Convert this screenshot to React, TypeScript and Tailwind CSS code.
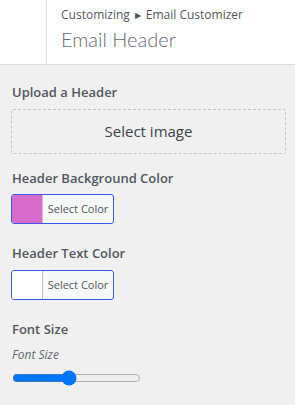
import React from "react";

function ColorButton({ color }: { color: string }) {
  return (
    <button className="flex h-[30px] w-[103px] overflow-hidden rounded-[3px] border border-[#3858e9] bg-[#f6f7f7] p-0">
      <span className="h-full w-[31px] border-r border-[#c3c4c7]" style={{ background: color }} />
      <span className="flex flex-1 items-center justify-center text-[11px] text-[#50575e]">Select Color</span>
    </button>
  );
}

export default function App() {
  return (
    <div className="h-[405px] w-[295px] bg-[#f0f0f1] font-['Open_Sans',sans-serif]">
      <div className="flex h-[65px] border-b border-[#dcdcde] bg-white">
        <div className="w-[47px] border-r border-[#dcdcde]" />
        <div className="flex flex-col pl-[14px] pt-[5px]">
          <div className="flex items-center text-[12px] leading-[20px] text-[#50575e]">
            <span>Customizing</span>
            <span className="mx-[5px] text-[8px]">▶</span>
            <span>Email Customizer</span>
          </div>
          <div className="mt-[1px] font-['Lato',sans-serif] text-[20px] font-light leading-[26px] text-[#646970]">Email Header</div>
        </div>
      </div>
      <div className="flex flex-col px-[11px]">
        <div className="mt-[18px] pl-[1px] text-[13px] font-semibold leading-[18px] text-[#50575e]">Upload a Header</div>
        <div className="mt-[8px] flex h-[45px] w-[275px] items-center justify-center rounded-[2px] border border-dashed border-[#c3c4c7] text-[15px] text-[#3c434a]">Select image</div>
        <div className="mt-[15px] pl-[1px] text-[13px] font-semibold leading-[18px] text-[#50575e]">Header Background Color</div>
        <div className="mt-[7px]"><ColorButton color="#d66bcc" /></div>
        <div className="mt-[20px] pl-[1px] text-[13px] font-semibold leading-[18px] text-[#50575e]">Header Text Color</div>
        <div className="mt-[8px]"><ColorButton color="#ffffff" /></div>
        <div className="mt-[20px] pl-[1px] text-[13px] font-semibold leading-[18px] text-[#50575e]">Font Size</div>
        <div className="mt-[9px] pl-[1px] text-[12px] italic leading-[16px] text-[#646970]">Font Size</div>
        <input type="range" min={0} max={100} defaultValue={43} className="mt-[7px] w-[129px] ml-[1px]" />
      </div>
    </div>
  );
}
